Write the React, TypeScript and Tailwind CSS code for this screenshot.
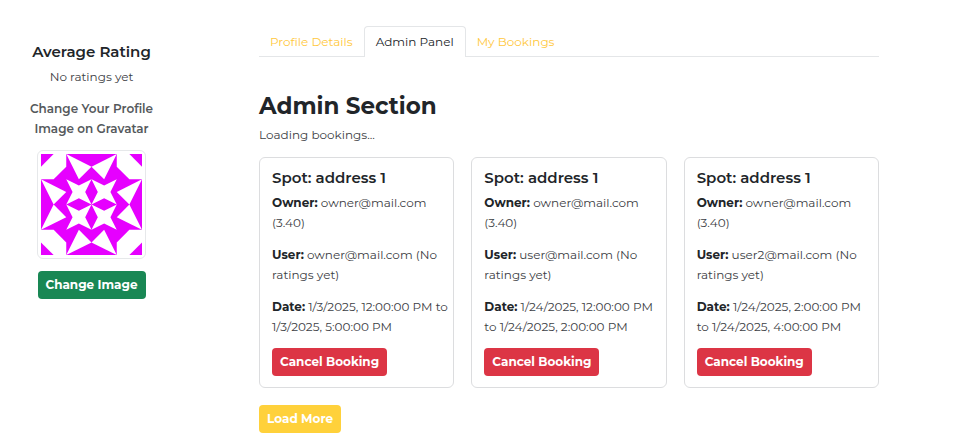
import type { ReactNode } from "react";

type Booking = {
  id: number;
  spot: string;
  owner: string;
  user: string;
  date: string;
};

const bookings: Booking[] = [
  {
    id: 1,
    spot: "address 1",
    owner: "owner@mail.com (3.40)",
    user: "owner@mail.com (No ratings yet)",
    date: "1/3/2025, 12:00:00 PM to 1/3/2025, 5:00:00 PM",
  },
  {
    id: 2,
    spot: "address 1",
    owner: "owner@mail.com (3.40)",
    user: "user@mail.com (No ratings yet)",
    date: "1/24/2025, 12:00:00 PM to 1/24/2025, 2:00:00 PM",
  },
  {
    id: 3,
    spot: "address 1",
    owner: "owner@mail.com (3.40)",
    user: "user2@mail.com (No ratings yet)",
    date: "1/24/2025, 2:00:00 PM to 1/24/2025, 4:00:00 PM",
  },
];

function Identicon() {
  const turns = [0, 90, 180, 270];
  return (
    <svg viewBox="0 0 304 304" className="block w-full" role="img" aria-label="Profile image">
      <rect width="304" height="304" fill="#e600ff" />
      {turns.map((turn) => (
        <g key={turn} transform={`rotate(${turn} 152 152)`} fill="#fff">
          <path d="M38 0H76V38L38 76H0V38Z" />
          <path d="M76 0L114 76L152 38Z" />
          <path d="M228 0L190 76L152 38Z" />
          <path d="M76 76L114 95L152 76L133 114L152 152L114 133L76 152L95 114Z" />
        </g>
      ))}
    </svg>
  );
}

function Field({ label, children }: { label: string; children: ReactNode }) {
  return (
    <p>
      <strong className="font-bold text-[#212529]">{label}:</strong> {children}
    </p>
  );
}

function BookingCard({ booking }: { booking: Booking }) {
  return (
    <article className="rounded-md border border-[#dcdddf] pt-[10px] pr-1 pb-[11px] pl-3">
      <h2 className="mb-[5px] text-[15px] leading-5 font-semibold text-[#212529]">
        Spot: {booking.spot}
      </h2>
      <div className="flex flex-col gap-3">
        <Field label="Owner">{booking.owner}</Field>
        <Field label="User">{booking.user}</Field>
        <Field label="Date">{booking.date}</Field>
      </div>
      <button
        type="button"
        className="mt-[11px] block h-7 rounded bg-[#dc3545] px-2 font-bold whitespace-nowrap text-white"
      >
        Cancel Booking
      </button>
    </article>
  );
}

export default function App() {
  return (
    <div className="flex min-h-screen bg-white pr-[83px] font-['Montserrat','Inter',sans-serif] text-[12px] leading-5 text-[#3c4044]">
      <aside className="flex w-[183px] shrink-0 flex-col items-center pt-[42px] text-center">
        <h2 className="mb-[5px] text-[15px] leading-5 font-semibold text-[#212529]">Average Rating</h2>
        <p className="mb-3">No ratings yet</p>
        <a href="#gravatar" className="mb-[11px] w-[142px] font-semibold text-[#55595c]">
          Change Your Profile Image on Gravatar
        </a>
        <div className="w-[109px] rounded-md border border-[#e6e8ea] p-[3px]">
          <Identicon />
        </div>
        <button
          type="button"
          className="mt-3 h-7 w-[108px] rounded bg-[#198754] font-bold whitespace-nowrap text-white"
        >
          Change Image
        </button>
      </aside>

      <main className="ml-[76px] min-w-0 flex-1 pt-[26px]">
        <nav className="flex border-b border-[#e4e6e8]">
          <a href="#profile" className="px-[11px] pt-[6px] pb-1 text-[#ffc83c]">
            Profile Details
          </a>
          <a
            href="#admin"
            aria-current="page"
            className="-mb-px rounded-t border border-b-0 border-[#e4e6e8] bg-white px-[11px] pt-[5px] pb-[5px] text-[#212529]"
          >
            Admin Panel
          </a>
          <a href="#bookings" className="px-[11px] pt-[6px] pb-1 text-[#ffc83c]">
            My Bookings
          </a>
        </nav>

        <h1 className="mt-[34px] text-[23px] leading-[30px] font-bold text-[#212529]">
          Admin Section
        </h1>
        <p className="mt-1">Loading bookings...</p>

        <section className="mt-3 grid grid-cols-3 gap-[17px]">
          {bookings.map((booking) => (
            <BookingCard key={booking.id} booking={booking} />
          ))}
        </section>

        <button
          type="button"
          className="mt-[17px] h-7 rounded bg-[#ffd13b] px-2 font-bold text-white"
        >
          Load More
        </button>
      </main>
    </div>
  );
}
